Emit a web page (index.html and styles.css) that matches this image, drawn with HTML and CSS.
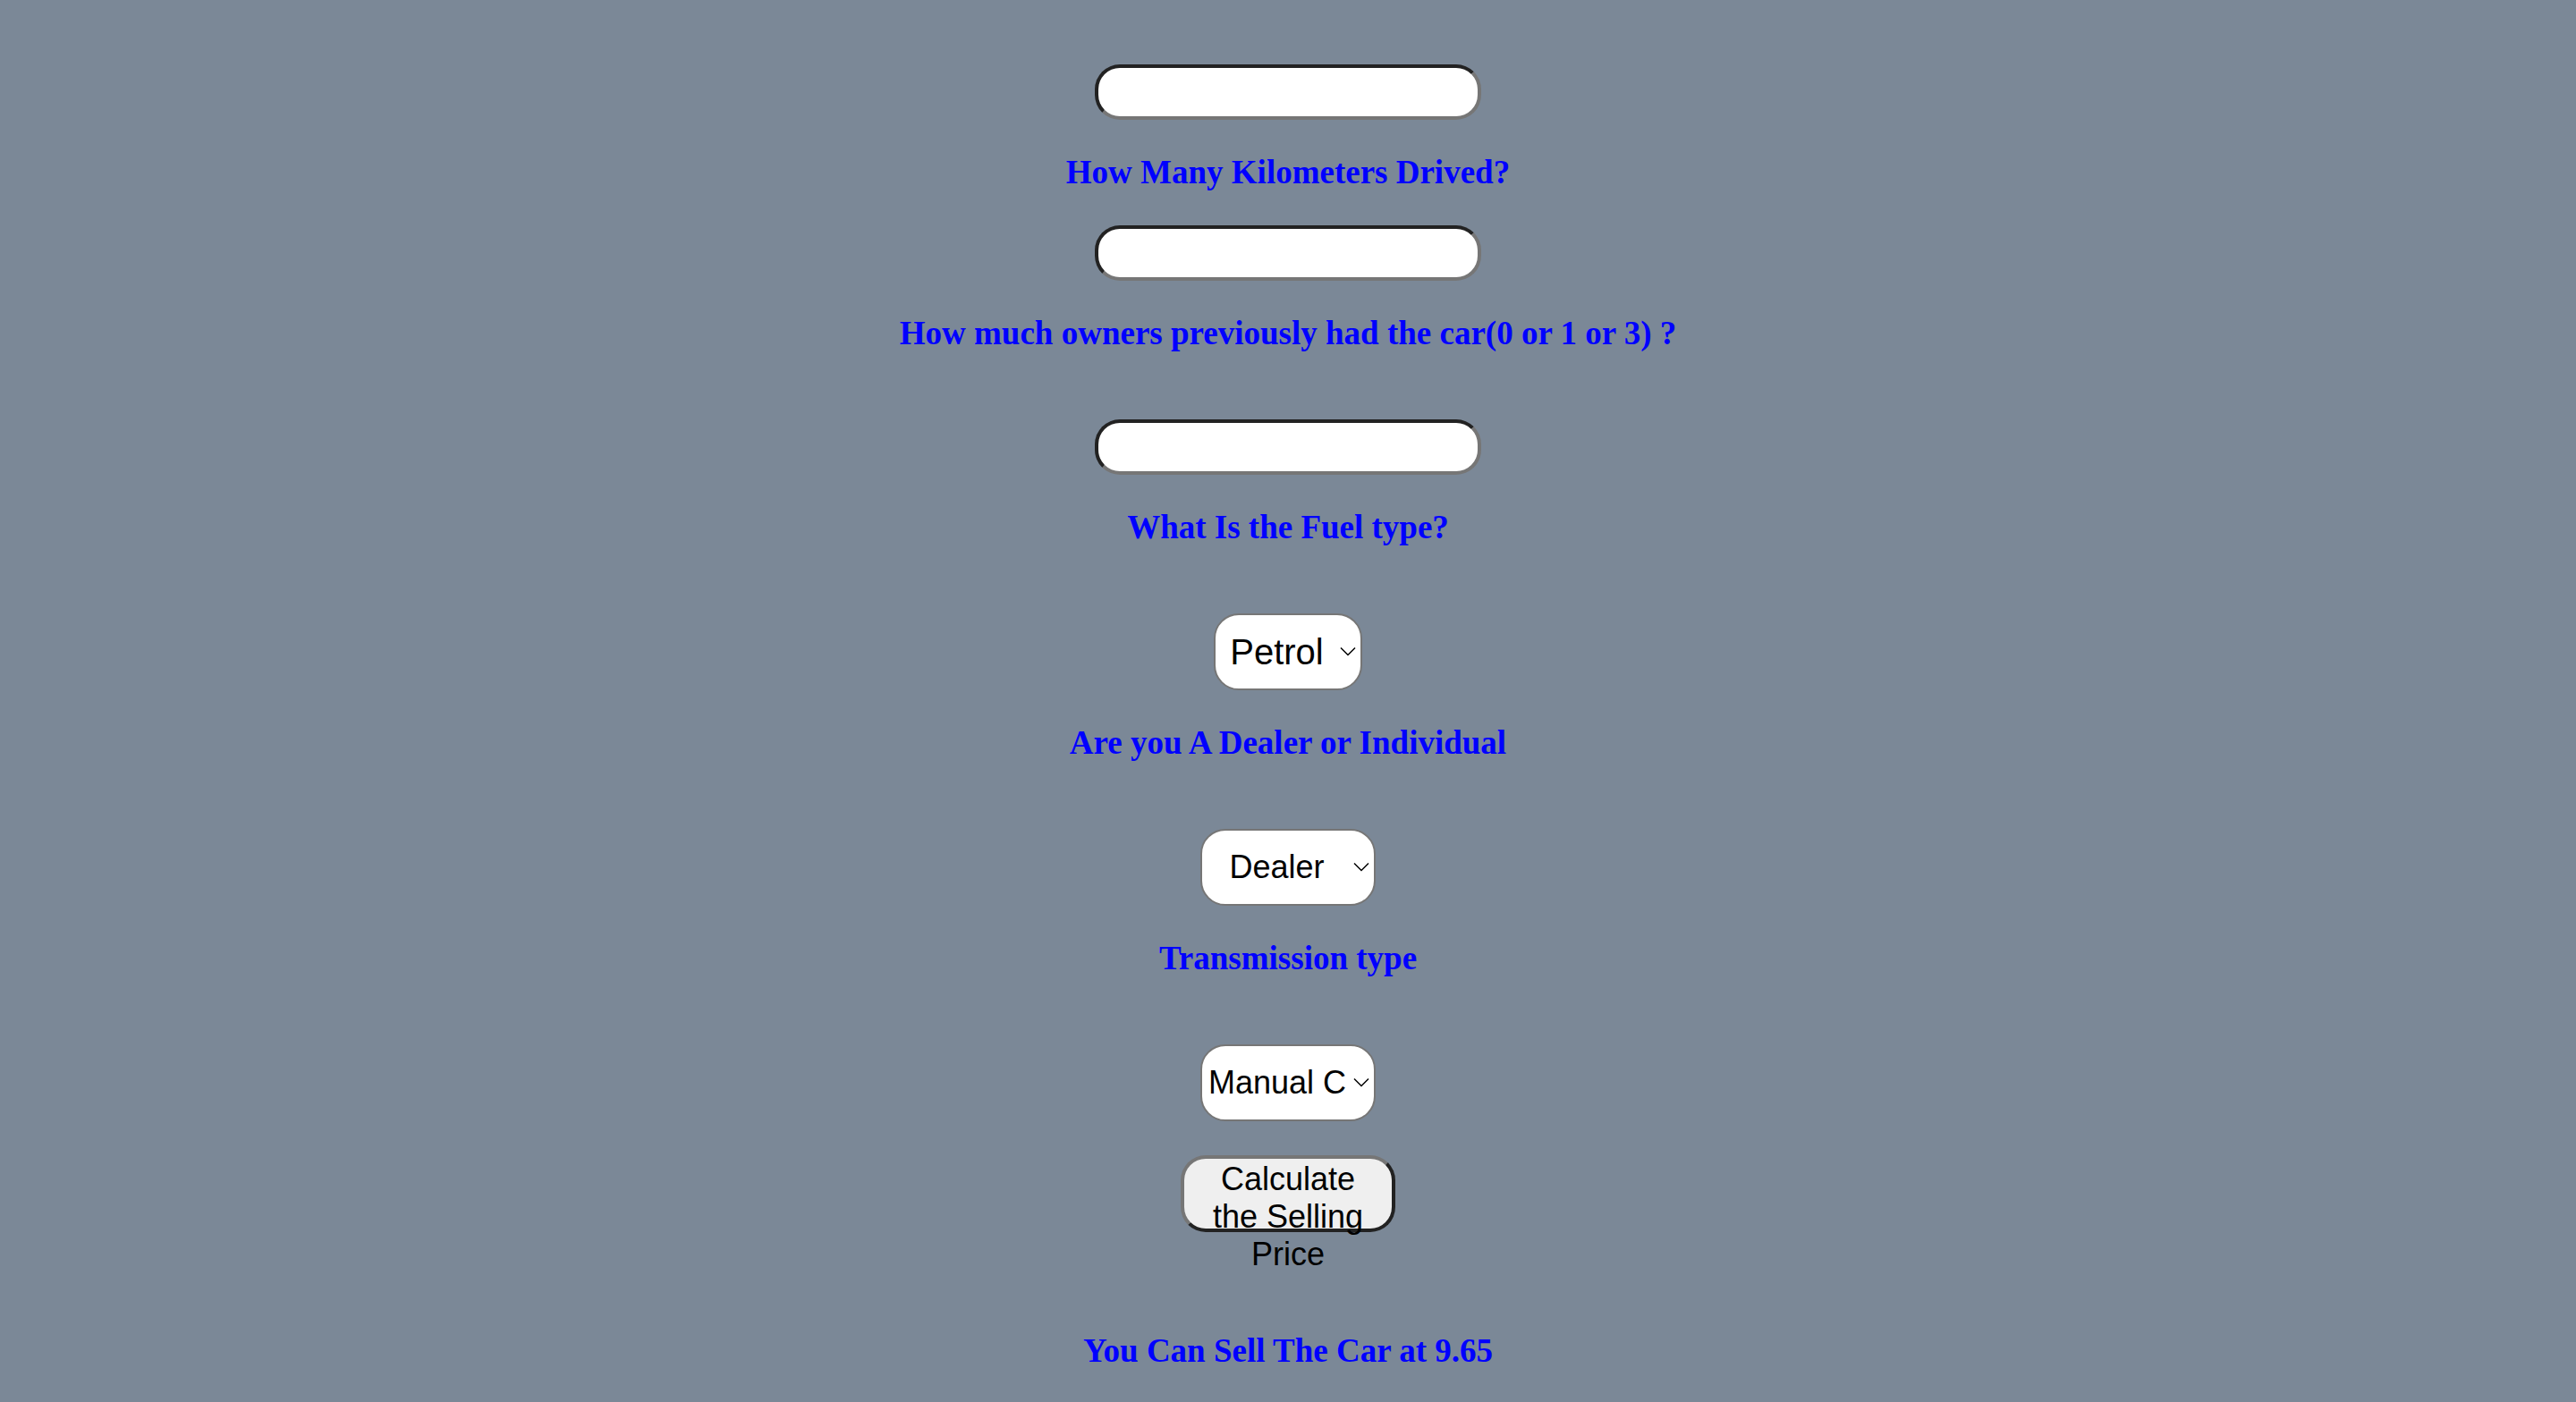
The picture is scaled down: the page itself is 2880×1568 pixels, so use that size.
FILE: index.html
```html
<!DOCTYPE html>
<html lang="en">
<head>
<meta charset="utf-8">
<meta name="viewport" content="width=device-width, initial-scale=1">
<title>Car Price Predictor</title>
<link rel="stylesheet" href="styles.css">
</head>
<body>
<form class="form">
  <input class="text-box" type="text" name="price" aria-label="Showroom price">
  <label class="question" for="kms">How Many Kilometers Drived?</label>
  <input class="text-box" type="text" id="kms" name="kms">
  <label class="question" for="owners">How much owners previously had the car(0 or 1 or 3) ?</label>
  <input class="text-box spaced" type="text" id="owners" name="owners">
  <label class="question" for="fuel">What Is the Fuel type?</label>
  <div class="picker picker-fuel spaced">
    <select class="select select-fuel" id="fuel" name="fuel">
      <option>Petrol</option>
      <option>Diesel</option>
      <option>CNG</option>
    </select>
    <svg class="chevron" viewBox="0 0 18 12" aria-hidden="true"><path d="M1 1.500 9 9.500 17 1.500"/></svg>
  </div>
  <label class="question" for="seller">Are you A Dealer or Individual</label>
  <div class="picker spaced">
    <select class="select" id="seller" name="seller">
      <option>Dealer</option>
      <option>Individual</option>
    </select>
    <svg class="chevron" viewBox="0 0 18 12" aria-hidden="true"><path d="M1 1.500 9 9.500 17 1.500"/></svg>
  </div>
  <label class="question" for="transmission">Transmission type</label>
  <div class="picker spaced">
    <select class="select" id="transmission" name="transmission">
      <option>Manual Car</option>
      <option>Automatic Car</option>
    </select>
    <svg class="chevron" viewBox="0 0 18 12" aria-hidden="true"><path d="M1 1.500 9 9.500 17 1.500"/></svg>
  </div>
  <button class="submit" type="button">Calculate the Selling Price</button>
  <h3 class="question result">You Can Sell The Car at 9.65</h3>
</form>
</body>
</html>
```
FILE: styles.css
```css
* {
  box-sizing: border-box;
}

body {
  margin: 0;
  background: #7b8897;
}

.form {
  display: flex;
  flex-direction: column;
  align-items: center;
  gap: 38px;
  padding: 72px 16px 32px;
}

.question {
  margin: 0;
  color: #0000ff;
  font: bold 37px/42px "Liberation Serif", "Times New Roman", serif;
  text-align: center;
}

.spaced {
  margin-top: 37px;
}

.text-box {
  width: 432px;
  max-width: 100%;
  height: 62px;
  padding: 2px 12px;
  border: 4px solid;
  border-color: #222222 #767676 #767676 #222222;
  border-radius: 28px;
  background: #ffffff;
  font: 36px/42px "Liberation Sans", Arial, sans-serif;
  text-align: center;
}

.picker {
  position: relative;
  width: 196px;
}

.picker-fuel {
  width: 166px;
}

.select {
  display: block;
  appearance: none;
  width: 100%;
  height: 86px;
  padding: 0 32px 0 7px;
  border: 2px solid #767676;
  border-radius: 28px;
  background: #ffffff;
  color: #000000;
  font: 36px/42px "Liberation Sans", Arial, sans-serif;
  text-align: center;
}

.select-fuel {
  font-size: 40px;
}

.chevron {
  position: absolute;
  top: 37px;
  right: 7px;
  width: 18px;
  height: 12px;
  fill: none;
  stroke: #000000;
  stroke-width: 1.500;
  pointer-events: none;
}

.submit {
  width: 240px;
  height: 86px;
  padding: 2px 12px;
  border: 4px solid;
  border-color: #767676 #222222 #222222 #767676;
  border-radius: 28px;
  background: #efefef;
  color: #000000;
  font: 36px/42px "Liberation Sans", Arial, sans-serif;
  text-align: center;
}

.result {
  margin-top: 74px;
}
```
